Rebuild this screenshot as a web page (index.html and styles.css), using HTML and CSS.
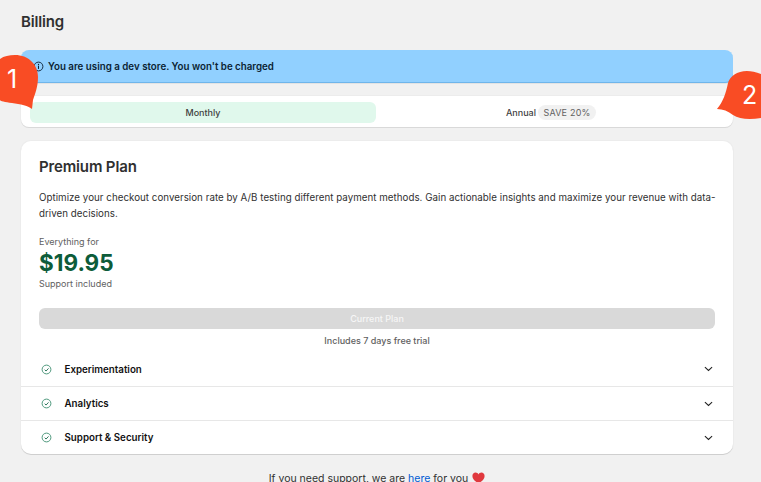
FILE: index.html
```html
<!DOCTYPE html>
<html lang="en">
<head>
<meta charset="utf-8">
<title>Billing</title>
<link rel="stylesheet" href="styles.css">
</head>
<body>
<main class="page">
  <h1 class="title">Billing</h1>
  <div class="banner">
    <svg class="info" viewBox="0 0 12 12" width="11" height="11"><circle cx="6" cy="6" r="4.8" fill="none" stroke="#0b1f33" stroke-width="1"/><path d="M6 5.5v2.7" stroke="#0b1f33" stroke-width="1.1" stroke-linecap="round"/><circle cx="6" cy="3.8" r=".7" fill="#0b1f33"/></svg>
    <span>You are using a dev store. You won't be charged</span>
  </div>
  <div class="tabs">
    <div class="tab tab-on">Monthly</div>
    <div class="tab">Annual <span class="save">SAVE 20%</span></div>
  </div>
  <section class="card">
    <div class="plan">
      <h2 class="plan-name">Premium Plan</h2>
      <p class="desc">Optimize your checkout conversion rate by A/B testing different payment methods. Gain actionable insights and maximize your revenue with data-driven decisions.</p>
      <div class="small ever">Everything for</div>
      <div class="price">$19.95</div>
      <div class="small">Support included</div>
      <button class="cta" type="button">Current Plan</button>
      <div class="trial">Includes 7 days free trial</div>
    </div>
    <div class="row">
      <svg class="check" viewBox="0 0 12 12" width="11" height="11"><circle cx="6" cy="6" r="4.8" fill="none" stroke="#3f8f72" stroke-width="1"/><path d="M4 6.2l1.5 1.5L8.2 4.8" fill="none" stroke="#1f6b50" stroke-width="1"/></svg>
      <span class="row-label">Experimentation</span>
      <svg class="chev" viewBox="0 0 10 6" width="9" height="6"><path d="M1 1l4 3.6L9 1" fill="none" stroke="#222" stroke-width="1.2"/></svg>
    </div>
    <div class="row">
      <svg class="check" viewBox="0 0 12 12" width="11" height="11"><circle cx="6" cy="6" r="4.8" fill="none" stroke="#3f8f72" stroke-width="1"/><path d="M4 6.2l1.5 1.5L8.2 4.8" fill="none" stroke="#1f6b50" stroke-width="1"/></svg>
      <span class="row-label">Analytics</span>
      <svg class="chev" viewBox="0 0 10 6" width="9" height="6"><path d="M1 1l4 3.6L9 1" fill="none" stroke="#222" stroke-width="1.2"/></svg>
    </div>
    <div class="row">
      <svg class="check" viewBox="0 0 12 12" width="11" height="11"><circle cx="6" cy="6" r="4.8" fill="none" stroke="#3f8f72" stroke-width="1"/><path d="M4 6.2l1.5 1.5L8.2 4.8" fill="none" stroke="#1f6b50" stroke-width="1"/></svg>
      <span class="row-label">Support &amp; Security</span>
      <svg class="chev" viewBox="0 0 10 6" width="9" height="6"><path d="M1 1l4 3.6L9 1" fill="none" stroke="#222" stroke-width="1.2"/></svg>
    </div>
  </section>
  <p class="support">If you need support, we are <a href="#">here</a> for you <svg class="heart" viewBox="0 0 14 13" width="13" height="12"><path d="M7 12.6C3 9.6.4 7.3.4 4.2.4 2 2 .6 3.8.6 5.2.6 6.4 1.4 7 2.6 7.6 1.4 8.8.6 10.2.6 12 .6 13.6 2 13.6 4.2c0 3.1-2.6 5.4-6.6 8.4z" fill="#e0393e"/></svg></p>
</main>
<div class="pin pin-one">
  <svg viewBox="0 0 38 56" width="38" height="56"><path d="M15 0C28 0 38 9 38 22 38 32 35 39 33 45L32 54C29 51 20 49 12 48 5 47 0 46 0 45V4C4 1 9 0 15 0Z" fill="#f94c24"/></svg>
  <span class="pin-num">1</span>
</div>
<div class="pin pin-two">
  <svg viewBox="0 0 46 50" width="46" height="50"><path d="M46 3C41 1 36 0 32 0 22 0 15 5 13 12 11 22 8 31 2 38 8 38 13 40 18 44 24 48 34 49 46 47Z" fill="#f94c24"/></svg>
  <span class="pin-num">2</span>
</div>
</body>
</html>
```
FILE: styles.css
```css
* { box-sizing: border-box; }
html, body { margin: 0; height: 482px; overflow: hidden; }
body {
  position: relative;
  background: #f1f1f1;
  color: #303030;
  font-family: Inter, "Liberation Sans", sans-serif;
  font-size: 9px;
  line-height: 15px;
}
.page { padding: 13px 28px 0 21px; }
.title { margin: 0 0 19px; font-size: 15px; line-height: 18px; font-weight: 600; letter-spacing: -.15px; }
.banner {
  display: flex; align-items: center; gap: 4px;
  height: 33px; padding: 0 12px;
  background: #91d0ff; border-radius: 8px;
  box-shadow: inset 0 -1px 0 #6fb5ea, 0 1px 0 #e3e3e3;
  color: #0b1f33; font-size: 9.75px; font-weight: 600;
}
.tabs {
  display: flex; gap: 2px;
  height: 31px; margin-top: 13px; padding: 6px 9px 4px;
  background: #fff; border-radius: 8px;
  box-shadow: 0 1px 0 #d9d9d9, 0 0 0 1px #ececec;
}
.tab { flex: 1; display: flex; align-items: center; justify-content: center; gap: 2px; border-radius: 6px; color: #3f3f3f; font-weight: 450; }
.tab-on { background: #e0f8ec; }
.save { padding: 0 5.5px; background: #f1f1f1; border-radius: 8px; color: #616161; font-weight: 400; letter-spacing: .2px; }
.card {
  margin-top: 14px; background: #fff; border-radius: 10px;
  box-shadow: 0 1px 0 #cfcfcf, 0 0 0 1px #ececec;
}
.plan { padding: 17px 18px 0; }
.plan-name { margin: 0 0 14px; font-size: 15px; line-height: 18px; font-weight: 600; letter-spacing: -.15px; }
.desc { margin: 0 -3px 12px 0; font-size: 9.75px; line-height: 16px; letter-spacing: .03px; }
.small { color: #616161; }
.price { font-size: 22.5px; line-height: 27px; font-weight: 700; color: #0d5c3a; }
.cta {
  display: block; width: 100%; height: 21px; margin-top: 17px;
  border: 0; border-radius: 6px; background: #d9d9d9; color: #f6f6f6;
  font: 500 9px/15px Inter, "Liberation Sans", sans-serif;
}
.trial { margin-top: 4px; text-align: center; color: #616161; font-weight: 500; }
.row {
  display: flex; align-items: center; gap: 13px;
  height: 34px; padding: 0 20.5px 0 19.5px;
  border-top: 1px solid #e7e7e7;
  font-size: 9.75px; font-weight: 600; color: #111;
}
.plan + .row { border-top: 0; margin-top: 4px; }
.row-label { flex: 1; }
.support { margin: 17px 0 0; text-align: center; font-size: 10.5px; line-height: 15px; color: #303030; }
.support a { color: #005bd3; text-decoration: none; }
.heart { vertical-align: -2px; margin-left: 1px; }
.pin { position: absolute; color: #fff; }
.pin svg { display: block; overflow: visible; }
.pin-num { position: absolute; font-size: 25px; line-height: 30px; font-weight: 400; }
.pin-one { left: 0; top: 55px; width: 38px; height: 56px; }
.pin-one .pin-num { left: 7px; top: 9px; }
.pin-two { left: 715px; top: 71px; width: 46px; height: 50px; }
.pin-two .pin-num { left: 27px; top: 9px; }
```
